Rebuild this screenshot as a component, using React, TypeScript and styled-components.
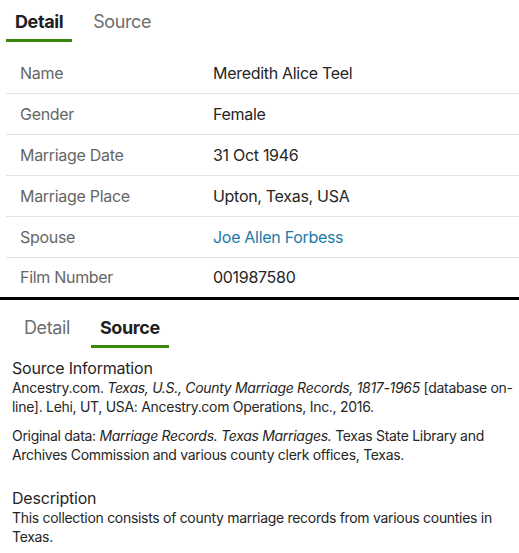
import React from 'react';
import styled, { createGlobalStyle } from 'styled-components';

const GlobalStyle = createGlobalStyle`
  html, body {
    margin: 0;
    padding: 0;
    background: #fff;
  }
  body {
    font-family: Inter, "Liberation Sans", Arial, sans-serif;
    color: #262626;
  }
`;

const Page = styled.div`
  width: 519px;
  display: flex;
  flex-direction: column;
`;

const Panel = styled.section<{ $top: number }>`
  display: flex;
  flex-direction: column;
  padding-top: ${(p) => p.$top}px;
`;

const TabList = styled.div<{ $indent: number }>`
  display: flex;
  gap: 12px;
  padding-left: ${(p) => p.$indent}px;
`;

const Tab = styled.button<{ $active?: boolean }>`
  font-family: inherit;
  font-size: 18px;
  line-height: 22px;
  font-weight: ${(p) => (p.$active ? 700 : 400)};
  color: ${(p) => (p.$active ? '#1f1f1f' : '#6e6e6e')};
  letter-spacing: -0.4px;
  background: none;
  border: none;
  padding: 11px 9px 6px;
  border-bottom: 3px solid ${(p) => (p.$active ? '#3a880b' : 'transparent')};
  cursor: pointer;
`;

const Table = styled.div`
  display: flex;
  flex-direction: column;
  margin: 11px 0 0 6px;
`;

const Row = styled.div<{ $last?: boolean }>`
  display: grid;
  grid-template-columns: 193px 1fr;
  align-items: center;
  height: ${(p) => (p.$last ? 38 : 40)}px;
  padding-left: 14px;
  border-bottom: 1px solid ${(p) => (p.$last ? 'transparent' : '#e2e2e2')};
  font-size: 16px;
  letter-spacing: -0.3px;
`;

const Label = styled.span`
  color: #666;
`;

const Value = styled.span`
  color: #262626;
`;

const Link = styled.a`
  color: #1b7aa8;
  text-decoration: none;
`;

const Divider = styled.hr`
  margin: 0;
  border: none;
  height: 3px;
  background: #000;
`;

const SourceBody = styled.div`
  display: flex;
  flex-direction: column;
  gap: 24px;
  padding: 10px 4px 0 12px;
`;

const Block = styled.div`
  display: flex;
  flex-direction: column;
`;

const Heading = styled.h3`
  margin: 0;
  font-size: 16px;
  line-height: 20px;
  font-weight: 400;
  letter-spacing: -0.2px;
  color: #262626;
`;

const Para = styled.p`
  margin: 0;
  font-size: 14px;
  line-height: 19px;
  letter-spacing: -0.3px;
  color: #262626;
  & + & {
    margin-top: 10px;
  }
`;

const rows: [string, React.ReactNode][] = [
  ['Name', 'Meredith Alice Teel'],
  ['Gender', 'Female'],
  ['Marriage Date', '31 Oct 1946'],
  ['Marriage Place', 'Upton, Texas, USA'],
  ['Spouse', <Link href="#">Joe Allen Forbess</Link>],
  ['Film Number', '001987580'],
];

export default function App() {
  return (
    <Page>
      <GlobalStyle />
      <Panel $top={0}>
        <TabList $indent={6}>
          <Tab $active>Detail</Tab>
          <Tab>Source</Tab>
        </TabList>
        <Table>
          {rows.map(([label, value], i) => (
            <Row key={label} $last={i === rows.length - 1}>
              <Label>{label}</Label>
              <Value>{value}</Value>
            </Row>
          ))}
        </Table>
      </Panel>
      <Divider />
      <Panel $top={6}>
        <TabList $indent={15}>
          <Tab>Detail</Tab>
          <Tab $active>Source</Tab>
        </TabList>
        <SourceBody>
          <Block>
            <Heading>Source Information</Heading>
            <Para>
              Ancestry.com. <i>Texas, U.S., County Marriage Records, 1817-1965</i> [database on-line].
              Lehi, UT, USA: Ancestry.com Operations, Inc., 2016.
            </Para>
            <Para>
              Original data: <i>Marriage Records. Texas Marriages.</i> Texas State Library and
              Archives Commission and various county clerk offices, Texas.
            </Para>
          </Block>
          <Block>
            <Heading>Description</Heading>
            <Para>
              This collection consists of county marriage records from various counties in Texas.
            </Para>
          </Block>
        </SourceBody>
      </Panel>
    </Page>
  );
}
